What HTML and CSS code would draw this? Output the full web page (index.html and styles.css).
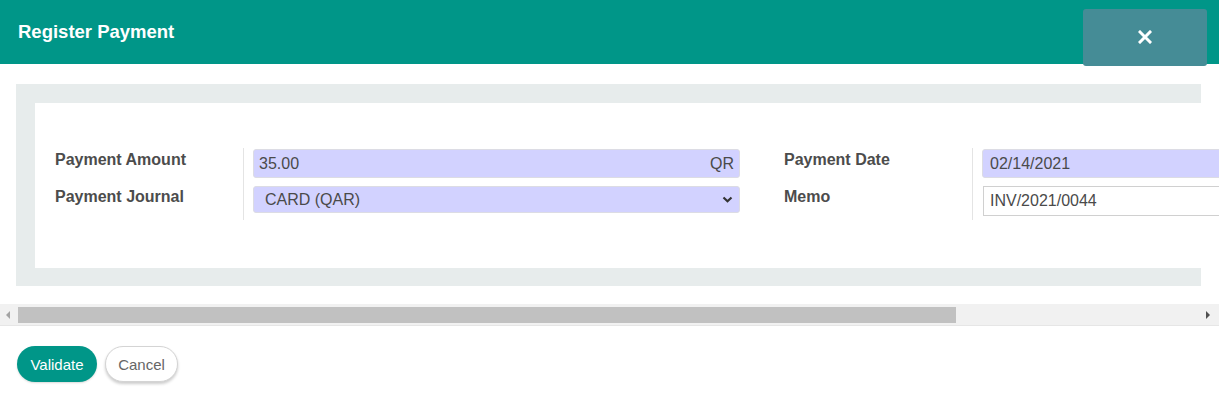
FILE: index.html
```html
<!DOCTYPE html>
<html lang="en">
<head>
  <meta charset="UTF-8">
  <title>Register Payment</title>
  <link rel="stylesheet" href="styles.css">
</head>
<body>
  <div class="modal">
    <header class="modal-header">
      <h4 class="modal-title">Register Payment</h4>
      <button class="close-btn" aria-label="Close">
        <svg width="14" height="14" viewBox="0 0 14 14"><path d="M2 2 L12 12 M12 2 L2 12" stroke="#fff" stroke-width="3" stroke-linecap="square"/></svg>
      </button>
    </header>

    <div class="scroll-area">
      <div class="sheet-bg">
        <div class="sheet">
          <!-- left group -->
          <div class="group">
            <div class="lbl">Payment Amount</div>
            <div class="fld">
              <div class="input required amount"><span>35.00</span><span>QR</span></div>
            </div>
            <div class="lbl low">Payment Journal</div>
            <div class="fld">
              <div class="input required select">
                <span>CARD (QAR)</span>
                <svg width="11" height="7" viewBox="0 0 11 7"><path d="M1.5 1.5 L5.5 5.2 L9.5 1.5" fill="none" stroke="#333" stroke-width="2.2"/></svg>
              </div>
            </div>
          </div>
          <!-- right group -->
          <div class="group group-right">
            <div class="lbl">Payment Date</div>
            <div class="fld">
              <div class="input required date">02/14/2021</div>
            </div>
            <div class="lbl low">Memo</div>
            <div class="fld">
              <div class="input memo">INV/2021/0044</div>
            </div>
          </div>
        </div>
      </div>
    </div>

    <div class="hscroll">
      <span class="arrow arrow-left"></span>
      <div class="thumb"></div>
      <span class="arrow arrow-right"></span>
    </div>

    <footer class="modal-footer">
      <button class="btn btn-primary">Validate</button>
      <button class="btn btn-secondary">Cancel</button>
    </footer>
  </div>
</body>
</html>
```

FILE: styles.css
```css
body {
  margin: 0;
  background: #fff;
  font-family: "Liberation Sans", Arial, sans-serif;
  color: #4a4a4a;
}

.modal {
  width: 1219px;
  height: 402px;
  background: #fff;
}

.modal-header {
  height: 64px;
  background-color: #009688;
  display: flex;
  align-items: flex-start;
  justify-content: space-between;
}

.modal-title {
  margin: 0;
  padding: 21px 0 0 18px;
  font-size: 18.5px;
  font-weight: bold;
  color: #fff;
}

.close-btn {
  position: relative;
  z-index: 1;
  margin: 9px 12px 0 0;
  width: 124px;
  height: 57px;
  border: none;
  border-radius: 3px;
  background-color: #458c96;
  display: flex;
  align-items: center;
  justify-content: center;
  padding: 0 0 2px 0;
}

.scroll-area {
  width: 1219px;
  overflow: hidden;
  padding-bottom: 18px;
}

.sheet-bg {
  box-sizing: border-box;
  width: 1185px;
  margin: 20px 0 0 16px;
  padding: 19px 0 18px 19px;
  background-color: #e7ecec;
}

.sheet {
  box-sizing: border-box;
  width: 1480px;
  background: #fff;
  padding: 45px 20px 48px;
  display: flex;
}

.group {
  display: grid;
  grid-template-columns: 189px 521px;
  grid-template-rows: 34px 38px;
}

.group-right {
  padding-left: 19px;
}

.lbl {
  box-sizing: border-box;
  border-right: 1px solid #e4e4e4;
  padding-top: 3px;
  font-size: 16px;
  font-weight: bold;
  color: #4c4c4c;
}

.lbl.low {
  padding-top: 6px;
}

.fld {
  padding: 1px 25px 0 9px;
}

.input {
  box-sizing: border-box;
  height: 29px;
  border: 1px solid #dcdce4;
  border-radius: 3px;
  font-size: 16px;
  color: #4a4a4a;
  display: flex;
  align-items: center;
  padding: 0 5px;
}

.required {
  background-color: #d2d2ff;
}

.amount {
  justify-content: space-between;
}

.select {
  margin-top: 3px;
  height: 27px;
  padding: 0 6px 0 11px;
  justify-content: space-between;
}

.date {
  padding-left: 7px;
  margin-right: -60px;
}

.memo {
  margin-top: 3px;
  height: 30px;
  margin-left: 1px;
  padding-left: 6px;
  background: #fff;
  border-color: #d0d0d0;
  border-radius: 0;
}

.hscroll {
  height: 21px;
  background-color: #f1f1f1;
  border-bottom: 1px solid #e6e6e6;
  display: flex;
  align-items: center;
}

.thumb {
  margin-left: 8px;
  width: 938px;
  height: 16px;
  background-color: #c1c1c1;
  margin-top: 1px;
  flex: none;
}

.arrow {
  width: 0;
  height: 0;
  border-top: 4px solid transparent;
  border-bottom: 4px solid transparent;
  flex: none;
}

.arrow-left {
  margin-left: 6px;
  border-right: 4px solid #a3a3a3;
}

.arrow-right {
  margin-left: auto;
  margin-right: 9px;
  border-left: 4px solid #505050;
}

.modal-footer {
  padding: 20px 0 0 17px;
  display: flex;
  gap: 8px;
}

.btn {
  height: 36px;
  border-radius: 18px;
  font-family: "Liberation Sans", Arial, sans-serif;
  font-size: 15px;
  padding: 0;
  cursor: pointer;
}

.btn-primary {
  width: 80px;
  background-color: #009688;
  border: none;
  color: #fff;
  box-shadow: 0 1px 2px rgba(0, 0, 0, 0.15);
}

.btn-secondary {
  width: 73px;
  background: #fff;
  border: 1px solid #d4d4d4;
  color: #666;
  box-shadow: 0 2px 3px rgba(0, 0, 0, 0.2);
}
```
